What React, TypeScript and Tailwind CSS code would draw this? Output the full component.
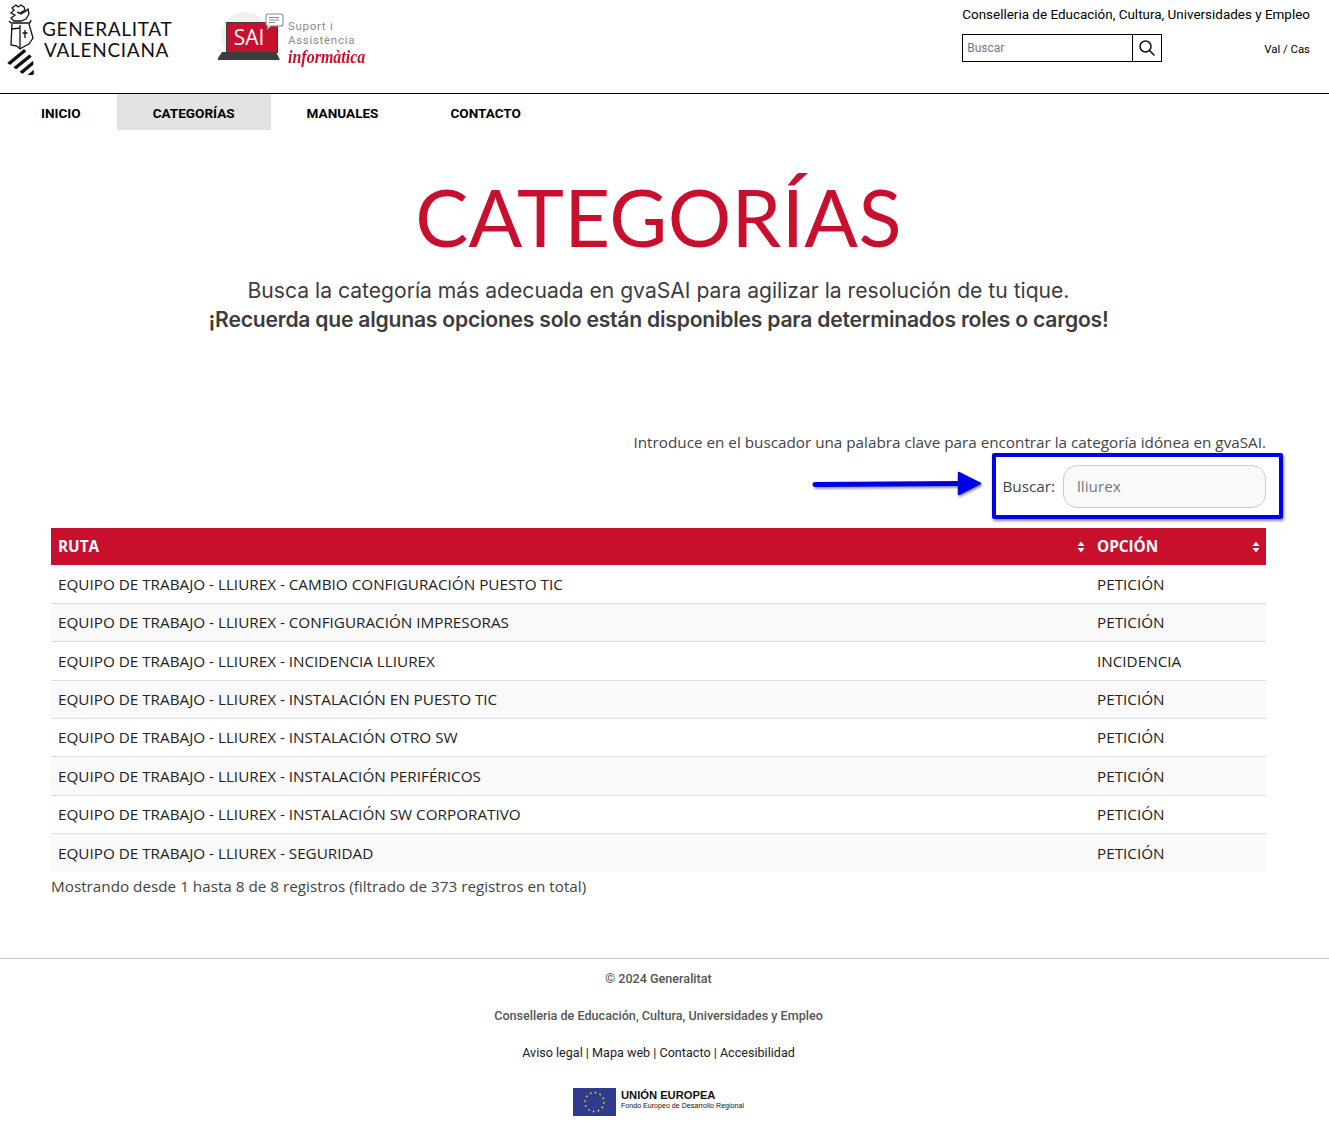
const rows = [
  ["EQUIPO DE TRABAJO - LLIUREX - CAMBIO CONFIGURACIÓN PUESTO TIC", "PETICIÓN"],
  ["EQUIPO DE TRABAJO - LLIUREX - CONFIGURACIÓN IMPRESORAS", "PETICIÓN"],
  ["EQUIPO DE TRABAJO - LLIUREX - INCIDENCIA LLIUREX", "INCIDENCIA"],
  ["EQUIPO DE TRABAJO - LLIUREX - INSTALACIÓN EN PUESTO TIC", "PETICIÓN"],
  ["EQUIPO DE TRABAJO - LLIUREX - INSTALACIÓN OTRO SW", "PETICIÓN"],
  ["EQUIPO DE TRABAJO - LLIUREX - INSTALACIÓN PERIFÉRICOS", "PETICIÓN"],
  ["EQUIPO DE TRABAJO - LLIUREX - INSTALACIÓN SW CORPORATIVO", "PETICIÓN"],
  ["EQUIPO DE TRABAJO - LLIUREX - SEGURIDAD", "PETICIÓN"],
]

const navItems = ["INICIO", "CATEGORÍAS", "MANUALES", "CONTACTO"]

function Shield() {
  return (
    <svg width="30" height="72" viewBox="0 0 30 72" className="shrink-0">
      <defs>
        <clipPath id="stripes">
          <path d="M1 59L17 44l11 11 1 17H19z" />
        </clipPath>
      </defs>
      <g fill="none" stroke="#111" strokeWidth="1.3">
        <path d="M7 5l4-3 2 2 3-2 3 2 1 3-5 3-3-1 4 2 5-3 2-2 1 5-3 5-5 2h-7l-3-3 4-3-4-2 3-3z" />
        <path d="M6 20h19M4 18l2 2M26 17l-1 3" />
        <path d="M7 21l-1 21 6 1 3 3 5-3 4-2 4-6-4-14" />
        <path d="M15 22v23M7 26l8-1M20 27v8M17.5 30h5" />
      </g>
      <g clipPath="url(#stripes)" stroke="#111" strokeWidth="3.4">
        <path d="M-2 57L18 41" />
        <path d="M0 64L24 44" />
        <path d="M4 70L30 49" />
        <path d="M11 74L34 55" />
        <path d="M18 78L36 63" />
      </g>
    </svg>
  )
}

function SaiLogo() {
  return (
    <div className="flex items-start">
      <svg width="68" height="54" viewBox="0 0 68 54" className="shrink-0">
        <circle cx="27" cy="26" r="24" fill="#f1f1f1" />
        <path d="M8 12h52v31H8z" fill="#3c3c3c" />
        <path d="M9 13h50v29H9z" fill="#c8102e" />
        <path d="M4 42h54l3 6a1 1 0 0 1-1 2H1a1 1 0 0 1-1-2z" fill="#3c3c3c" />
        <rect x="48" y="4" width="17" height="12" rx="2" fill="#fff" stroke="#8a8a8a" strokeWidth="1.1" />
        <path d="M50 15.5l-1 4 4-3.5" fill="#fff" stroke="#8a8a8a" />
        <path d="M51 7.5h10M51 10h10M51 12.5h6" stroke="#8a8a8a" strokeWidth="1" />
        <text x="31" y="35" textAnchor="middle" fill="#fff" fontSize="21" fontFamily="'Open Sans', sans-serif">SAI</text>
      </svg>
      <div className="mt-[8.5px] ml-[2px] flex flex-col font-['Roboto',sans-serif] text-[11.5px] leading-[14.5px] tracking-[0.7px] text-[#8a8a8a]">
        <span>Suport i</span>
        <span>Assistència</span>
        <span className="mt-[2px] inline-block origin-center scale-y-[1.2] font-['Liberation_Serif',serif] text-[16px] leading-[14px] font-bold tracking-normal text-[#c8102e] italic">
          informàtica
        </span>
      </div>
    </div>
  )
}

function SortIcon() {
  return (
    <svg width="8" height="12" viewBox="0 0 8 12" className="shrink-0">
      <path d="M4 .5l3.5 4.5h-7zM4 11.5L.5 7h7z" fill="#fff" />
    </svg>
  )
}

export default function App() {
  return (
    <div className="relative min-h-[1131px] bg-white font-['Roboto',sans-serif] text-black">
      <header className="flex h-[94px] justify-between border-b border-black pr-[19px]">
        <div className="flex items-start">
          <div className="mt-[3px] ml-[5px] flex items-start">
            <Shield />
            <div className="mt-[15px] ml-[7px] flex w-[140px] flex-col font-['Lato',sans-serif] text-[19px] leading-[21px] tracking-[0.7px] text-[#111]">
              <span>GENERALITAT</span>
              <span className="ml-[2px]">VALENCIANA</span>
            </div>
          </div>
          <div className="mt-[10px] ml-[36px]">
            <SaiLogo />
          </div>
        </div>
        <div className="flex flex-col items-end pt-[7px]">
          <p className="text-[13.46px] leading-[15px]">Conselleria de Educación, Cultura, Universidades y Empleo</p>
          <div className="mt-[12px] flex w-full items-center">
            <div className="flex h-[28px] w-[200px] border border-black">
              <div className="flex flex-1 items-center pl-[4px] text-[12px] text-[#777]">Buscar</div>
              <div className="flex w-[29px] items-center justify-center border-l border-black">
                <svg width="18" height="18" viewBox="0 0 18 18" fill="none" stroke="#111" strokeWidth="1.5">
                  <circle cx="7.5" cy="7.5" r="5.5" />
                  <path d="M11.5 11.5l5 5" />
                </svg>
              </div>
            </div>
            <span className="ml-auto pt-[3px] text-[11.4px]">Val / Cas</span>
          </div>
        </div>
      </header>

      <nav className="flex h-[36px] pl-[5px]">
        {navItems.map(item => (
          <a
            key={item}
            className={`flex items-center px-[36px] pt-[2px] text-[13.55px] font-bold ${item === "CATEGORÍAS" ? "bg-[#e3e3e3]" : ""}`}
          >
            {item}
          </a>
        ))}
      </nav>

      <main className="w-[1317px] pr-[51px] pl-[51px]">
        <h1 className="mt-[35px] text-center font-['Lato',sans-serif] text-[79.5px] leading-[104px] tracking-[0.3px] text-[#c8102e]">
          CATEGORÍAS
        </h1>
        <div className="mt-[7px] text-center font-['Inter',sans-serif] text-[21.12px] leading-[29px] text-[#3c3c3c]">
          <p>Busca la categoría más adecuada en gvaSAI para agilizar la resolución de tu tique.</p>
          <p className="font-semibold tracking-[-0.22px]">¡Recuerda que algunas opciones solo están disponibles para determinados roles o cargos!</p>
        </div>

        <p className="mt-[97px] text-right font-['Open_Sans',sans-serif] text-[15.25px] leading-[22px] text-[#444]">
          Introduce en el buscador una palabra clave para encontrar la categoría idónea en gvaSAI.
        </p>
        <div className="mt-[11px] flex h-[44px] items-center justify-end font-['Open_Sans',sans-serif] text-[15.25px] text-[#444]">
          <label>Buscar:</label>
          <div className="ml-[8px] flex h-[43px] w-[203px] items-center rounded-[14px] border border-[#ccc] bg-[#f9f9f9] pl-[13px] text-[#777]">
            lliurex
          </div>
        </div>

        <table className="mt-[20px] w-full border-collapse font-['Open_Sans',sans-serif] text-[15.25px]">
          <thead>
            <tr className="h-[37px] bg-[#c8102e] text-left text-[15.3px] font-bold text-white">
              <th className="pr-[5px] pl-[7px]">
                <div className="flex items-center justify-between">RUTA <SortIcon /></div>
              </th>
              <th className="w-[176px] pr-[6px] pl-[7px]">
                <div className="flex items-center justify-between">OPCIÓN <SortIcon /></div>
              </th>
            </tr>
          </thead>
          <tbody className="text-[#222]">
            {rows.map((row, i) => (
              <tr key={row[0]} className={`h-[38.4px] border-t border-[#ddd] first:border-t-0 ${i % 2 === 1 ? "bg-[#f9f9f9]" : ""}`}>
                <td className="px-[7px]">{row[0]}</td>
                <td className="px-[7px]">{row[1]}</td>
              </tr>
            ))}
          </tbody>
        </table>
        <p className="mt-[3px] font-['Open_Sans',sans-serif] text-[15.25px] leading-[22px] text-[#444]">
          Mostrando desde 1 hasta 8 de 8 registros (filtrado de 373 registros en total)
        </p>
      </main>

      <footer className="mt-[61px] border-t border-[#ccc]">
        <div className="flex w-[1317px] flex-col items-center text-[12.6px]">
          <p className="mt-[12px] leading-[16px] font-medium text-[#555]">© 2024 Generalitat</p>
          <p className="mt-[21px] leading-[16px] font-medium text-[#555]">Conselleria de Educación, Cultura, Universidades y Empleo</p>
          <p className="mt-[21px] leading-[16px] text-[#222]">Aviso legal | Mapa web | Contacto | Accesibilidad</p>
          <div className="mt-[27px] flex items-start">
            <svg width="43" height="28" viewBox="0 0 43 28" className="shrink-0">
              <rect width="43" height="28" fill="#2f3b8f" />
              <circle cx="21.5" cy="14" r="9.5" fill="none" stroke="#f5d90a" strokeWidth="1.6" strokeDasharray="1.6 3.37" />
            </svg>
            <div className="ml-[5px] flex flex-col font-['Liberation_Sans',sans-serif] text-[#111]">
              <span className="text-[11.2px] leading-[14px] font-bold">UNIÓN EUROPEA</span>
              <span className="text-[7.1px] leading-[9px]">Fondo Europeo de Desarrollo Regional</span>
            </div>
          </div>
        </div>
      </footer>

      {/* anotacion azul encima de la pagina */}
      <div className="absolute top-[453px] left-[992px] h-[66px] w-[291px] rounded-[2px] border-[4px] border-[#0000e6] shadow-[1px_2px_3px_rgba(0,0,0,0.45)]" />
      <svg width="176" height="34" viewBox="0 0 176 34" className="absolute top-[468px] left-[810px] drop-shadow-[1px_2px_1px_rgba(0,0,0,0.4)]">
        <path d="M5 16.5L150 15.5" stroke="#0000e6" strokeWidth="5" strokeLinecap="round" />
        <path d="M149 5l21 10.5L149 26z" fill="#0000e6" stroke="#0000e6" strokeWidth="2.5" strokeLinejoin="round" />
      </svg>
    </div>
  )
}
